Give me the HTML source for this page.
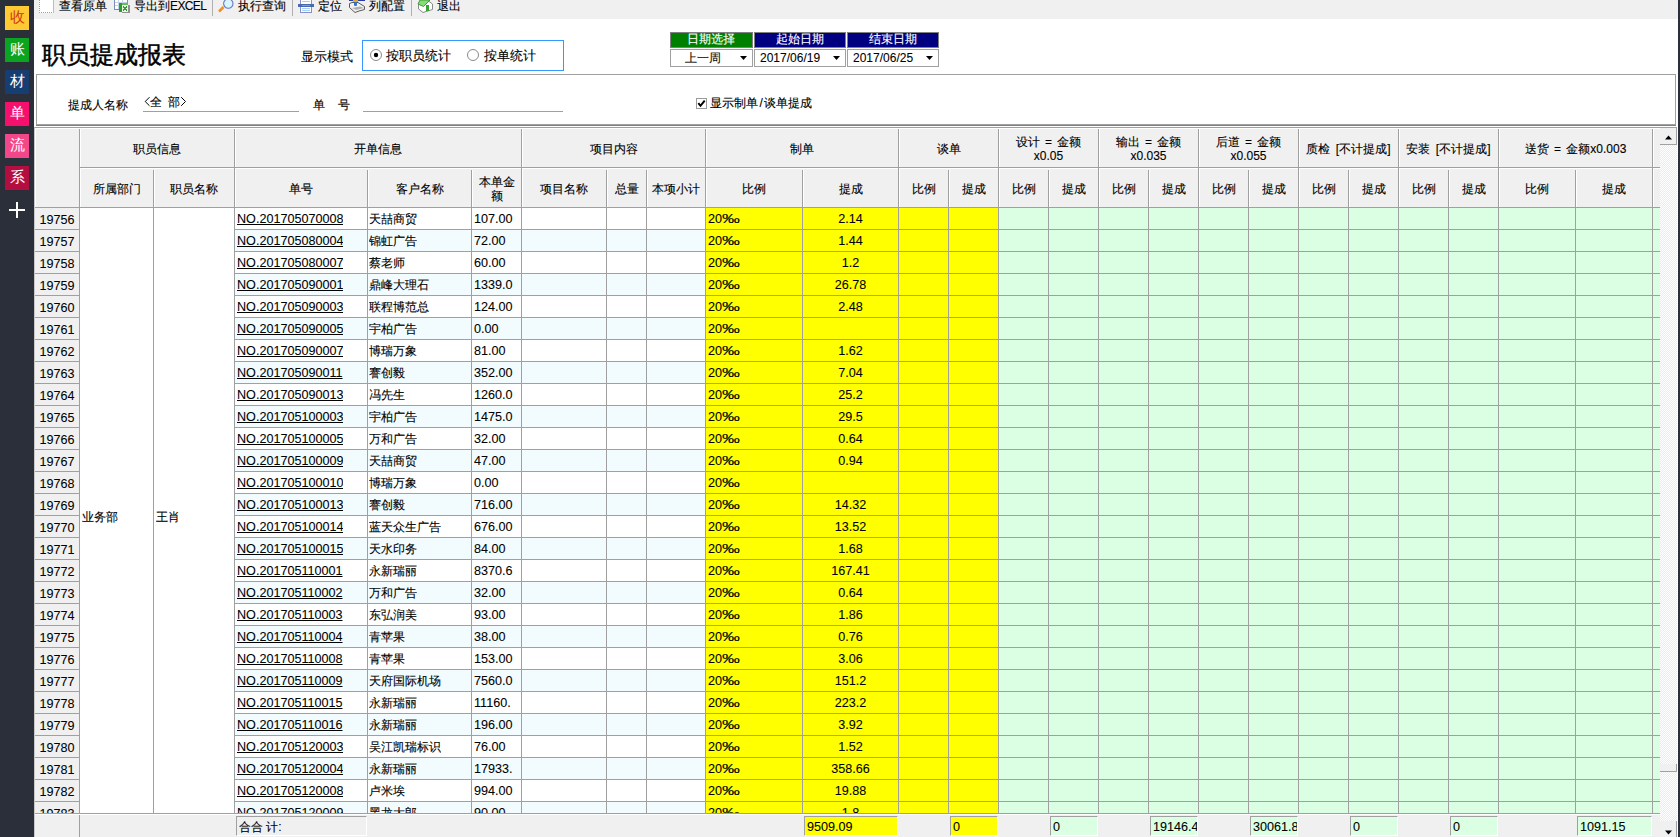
<!DOCTYPE html>
<html><head><meta charset="utf-8"><title>职员提成报表</title>
<style>
*{margin:0;padding:0;box-sizing:border-box}
html,body{width:1680px;height:837px;overflow:hidden;background:#fff;font-family:"Liberation Sans",sans-serif;font-size:12px;color:#000}
.a,.t,.c,.hc{-webkit-text-stroke-width:0.12px}
.sb{-webkit-text-stroke-width:0}
.a{position:absolute}
.t{position:absolute;white-space:nowrap;line-height:14px}
.sb{left:5px;width:24px;height:24px;color:#fff;font-size:15px;line-height:22px;text-align:center}
.tb{top:-2px;font-size:12px;line-height:16px}
.hl{position:absolute;height:1px;background:#a0a0a0}
.vl{position:absolute;width:1px;background:#a0a0a0}
.hc{position:absolute;text-align:center;line-height:14px;white-space:nowrap;word-spacing:2px}
.c{position:absolute;white-space:nowrap;line-height:14px;overflow:hidden}
.n{font-size:12.6px;-webkit-text-stroke-width:0.08px}
</style></head><body>

<div class="a" style="left:0;top:0;width:34px;height:837px;background:#2a2f3a"></div>
<div class="a" style="left:1678px;top:0;width:2px;height:837px;background:#2a2f3a"></div>
<div class="a sb" style="top:6px;background:#ffc933;color:#cf3a12">收</div>
<div class="a sb" style="top:38px;background:#0aa420;color:#fff">账</div>
<div class="a sb" style="top:70px;background:#173e73;color:#fff">材</div>
<div class="a sb" style="top:102px;background:#f5106e;color:#fff">单</div>
<div class="a sb" style="top:134px;background:#f3478a;color:#fff">流</div>
<div class="a sb" style="top:166px;background:#b40e40;color:#fff">系</div>
<div class="a" style="left:9px;top:209px;width:16px;height:2px;background:#fff"></div>
<div class="a" style="left:16px;top:202px;width:2px;height:16px;background:#fff"></div>
<div class="a" style="left:34px;top:0;width:1644px;height:19px;background:#f0f0f0"></div>
<div class="t tb" style="left:59px">查看原单</div>
<div class="t tb" style="left:134px">导出到<span style="letter-spacing:-0.6px">EXCEL</span></div>
<div class="t tb" style="left:238px">执行查询</div>
<div class="t tb" style="left:318px">定位</div>
<div class="t tb" style="left:369px">列配置</div>
<div class="t tb" style="left:437px">退出</div>
<div class="a" style="left:212px;top:0;width:1px;height:16px;background:#b0b0b0"></div>
<div class="a" style="left:292px;top:0;width:1px;height:16px;background:#b0b0b0"></div>
<div class="a" style="left:411px;top:0;width:1px;height:16px;background:#b0b0b0"></div>
<svg class="a" style="left:0;top:0" width="470" height="19" shape-rendering="crispEdges"><rect x="39" y="0" width="15" height="13" fill="#fff"/><path d="M39.5 0 V12.5 H53.5 V0" fill="none" stroke="#9a9ad0" stroke-dasharray="1,1"/><line x1="53.5" y1="0" x2="53.5" y2="13" stroke="#b8b8d8"/><rect x="114.5" y="-1" width="13" height="10.5" fill="#fff" stroke="#7890b8"/><line x1="118.5" y1="0" x2="118.5" y2="9" stroke="#c8d4e8"/><line x1="122.5" y1="0" x2="122.5" y2="9" stroke="#c8d4e8"/><line x1="115" y1="2.5" x2="127" y2="2.5" stroke="#c8d4e8"/><line x1="115" y1="5.5" x2="127" y2="5.5" stroke="#c8d4e8"/><rect x="128" y="5" width="2" height="8" fill="#909090"/><rect x="122" y="12" width="8" height="1" fill="#909090"/><rect x="119" y="3" width="9" height="2" fill="#5cc05c"/><rect x="119" y="3" width="3" height="9" fill="#2f9a2f"/><rect x="122" y="5" width="6" height="7" fill="#e8f8e0"/><path d="M123 6 L127 11 M127 6 L123 11" stroke="#3a9a3a" stroke-width="1.3"/></svg>
<svg class="a" style="left:0;top:0" width="470" height="19"><line x1="219" y1="11.5" x2="223.5" y2="7" stroke="#f0902a" stroke-width="2.6"/><circle cx="228.3" cy="3.6" r="4.7" fill="#d8f6ff" stroke="#6a76c0" stroke-width="1.1"/><rect x="300.5" y="-1" width="11" height="13.5" fill="#fff" stroke="#8a8ec8"/><rect x="302" y="1" width="8" height="1" fill="#a8d0ff"/><rect x="302" y="8" width="8" height="1" fill="#a8d0ff"/><rect x="302" y="10" width="8" height="1" fill="#a8d0ff"/><rect x="298" y="4" width="16" height="3" fill="#4a6ab0"/><rect x="302" y="5" width="8" height="1" fill="#7a9ae8"/><rect x="349" y="0" width="16" height="1" fill="#2a3aa0"/><path d="M349.5 3.5 L352 2.5 L358 2.5 L364.5 6.5 L364.5 9.5 L359 11 L355 12.5 L349.5 7.5 Z" fill="#f2f2f2" stroke="#5a5a5a" stroke-width="1"/><path d="M352 8 L360 6.5 L364 8 L356 10 Z" fill="#b0b0b0"/><rect x="353" y="0" width="5" height="2" fill="#d8b030"/><rect x="354" y="2" width="3" height="4" rx="1" fill="#3a70d0"/><path d="M418.5 4 L418.5 9 L423 12.5 L432.5 9.5 L432.5 4 L428.5 1 Z" fill="#fff" stroke="#8a8a8a" stroke-width="1"/><path d="M418 4 L420 0 L430 0 L423.5 6.5 Z" fill="#80e070" stroke="#3a8a3a" stroke-width="0.9"/><rect x="426" y="5" width="3" height="6" fill="#3aa03a"/></svg>
<div class="t" style="left:42px;top:41px;font-size:24px;line-height:28px;-webkit-text-stroke-width:0.5px">职员提成报表</div>
<div class="t" style="left:301px;top:50px;font-size:13px">显示模式</div>
<div class="a" style="left:362px;top:40px;width:202px;height:31px;border:1px solid #3399ff"></div>
<svg class="a" style="left:369px;top:48px" width="14" height="14"><circle cx="7" cy="7" r="5.5" fill="#fff" stroke="#8a8a8a"/><circle cx="7" cy="7" r="2.2" fill="#000"/></svg>
<div class="t" style="left:386px;top:49px;font-size:13px">按职员统计</div>
<svg class="a" style="left:466px;top:48px" width="14" height="14"><circle cx="7" cy="7" r="5.5" fill="#fff" stroke="#8a8a8a"/></svg>
<div class="t" style="left:484px;top:49px;font-size:13px">按单统计</div>
<div class="a" style="left:670px;top:32px;width:83px;height:16px;background:#008000;border:1px solid #808080"></div>
<div class="t" style="left:670px;top:32px;width:82px;color:#fff;text-align:center;font-size:12px">日期选择</div>
<div class="a" style="left:754px;top:32px;width:92px;height:16px;background:#000080;border:1px solid #808080"></div>
<div class="t" style="left:754px;top:32px;width:91px;color:#fff;text-align:center;font-size:12px">起始日期</div>
<div class="a" style="left:847px;top:32px;width:92px;height:16px;background:#000080;border:1px solid #808080"></div>
<div class="t" style="left:847px;top:32px;width:91px;color:#fff;text-align:center;font-size:12px">结束日期</div>
<div class="a" style="left:670px;top:49px;width:83px;height:18px;background:#fff;border:1px solid #a0a0a0"></div>
<div class="t n" style="left:685px;top:51px;font-size:12px;line-height:14px">上一周</div>
<svg class="a" style="left:740px;top:56px" width="8" height="5"><path d="M0 0 L7 0 L3.5 4 Z" fill="#000"/></svg>
<div class="a" style="left:754px;top:49px;width:92px;height:18px;background:#fff;border:1px solid #a0a0a0"></div>
<div class="t n" style="left:760px;top:51px;font-size:12px;line-height:14px">2017/06/19</div>
<svg class="a" style="left:833px;top:56px" width="8" height="5"><path d="M0 0 L7 0 L3.5 4 Z" fill="#000"/></svg>
<div class="a" style="left:847px;top:49px;width:92px;height:18px;background:#fff;border:1px solid #a0a0a0"></div>
<div class="t n" style="left:853px;top:51px;font-size:12px;line-height:14px">2017/06/25</div>
<svg class="a" style="left:926px;top:56px" width="8" height="5"><path d="M0 0 L7 0 L3.5 4 Z" fill="#000"/></svg>
<div class="a" style="left:36px;top:74px;width:1640px;height:51px;border:1px solid #a0a0a0"></div>
<div class="a" style="left:36px;top:125px;width:1640px;height:1px;background:#3391f0"></div>
<div class="t" style="left:68px;top:98px">提成人名称</div>
<svg class="a" style="left:140px;top:90px" width="50" height="20"><path d="M9.5 7.2 L5.2 11.5 L9.5 15.8 M41.2 7.2 L45.5 11.5 L41.2 15.8" fill="none" stroke="#000" stroke-width="1"/></svg><div class="t" style="left:150px;top:95px">全</div><div class="t" style="left:168px;top:95px">部</div>
<div class="a" style="left:143px;top:111px;width:156px;height:1px;background:#a0a0a0"></div>
<div class="t" style="left:313px;top:98px">单&nbsp;&nbsp;&nbsp;&nbsp;号</div>
<div class="a" style="left:363px;top:111px;width:200px;height:1px;background:#a0a0a0"></div>
<svg class="a" style="left:696px;top:98px" width="11" height="11"><rect x="0.5" y="0.5" width="10" height="10" fill="#fff" stroke="#9a9a9a"/><path d="M2.3 5.2 L4.5 7.8 L8.7 2.6" stroke="#000" stroke-width="2" fill="none"/></svg>
<div class="t" style="left:710px;top:96px">显示制单<span style="margin:0 1.5px">/</span>谈单提成</div>
<div class="a" style="left:34px;top:127px;width:1643px;height:710px;background:#fff;border-left:1px solid #c8c8c8;border-top:1px solid #a0a0a0"></div>
<div class="a" style="left:35px;top:128px;width:1625px;height:79px;background:#f0f0f0;border-top:1px solid #fff;border-left:1px solid #fff"></div>
<div class="a" style="left:35px;top:208px;width:1625px;height:605px;overflow:hidden">
<div class="a" style="left:0;top:0px;width:44px;height:21px;background:#f0f0f0"></div>
<div class="a" style="left:200px;top:0px;width:470px;height:21px;background:#fff"></div>
<div class="a" style="left:671px;top:0px;width:292px;height:21px;background:#ffff00"></div>
<div class="a" style="left:964px;top:0px;width:661px;height:21px;background:#daffe2"></div>
<div class="a" style="left:0;top:22px;width:44px;height:21px;background:#f0f0f0"></div>
<div class="a" style="left:200px;top:22px;width:470px;height:21px;background:#f2fcff"></div>
<div class="a" style="left:671px;top:22px;width:292px;height:21px;background:#ffff00"></div>
<div class="a" style="left:964px;top:22px;width:661px;height:21px;background:#daffe2"></div>
<div class="a" style="left:0;top:44px;width:44px;height:21px;background:#f0f0f0"></div>
<div class="a" style="left:200px;top:44px;width:470px;height:21px;background:#fff"></div>
<div class="a" style="left:671px;top:44px;width:292px;height:21px;background:#ffff00"></div>
<div class="a" style="left:964px;top:44px;width:661px;height:21px;background:#daffe2"></div>
<div class="a" style="left:0;top:66px;width:44px;height:21px;background:#f0f0f0"></div>
<div class="a" style="left:200px;top:66px;width:470px;height:21px;background:#f2fcff"></div>
<div class="a" style="left:671px;top:66px;width:292px;height:21px;background:#ffff00"></div>
<div class="a" style="left:964px;top:66px;width:661px;height:21px;background:#daffe2"></div>
<div class="a" style="left:0;top:88px;width:44px;height:21px;background:#f0f0f0"></div>
<div class="a" style="left:200px;top:88px;width:470px;height:21px;background:#fff"></div>
<div class="a" style="left:671px;top:88px;width:292px;height:21px;background:#ffff00"></div>
<div class="a" style="left:964px;top:88px;width:661px;height:21px;background:#daffe2"></div>
<div class="a" style="left:0;top:110px;width:44px;height:21px;background:#f0f0f0"></div>
<div class="a" style="left:200px;top:110px;width:470px;height:21px;background:#f2fcff"></div>
<div class="a" style="left:671px;top:110px;width:292px;height:21px;background:#ffff00"></div>
<div class="a" style="left:964px;top:110px;width:661px;height:21px;background:#daffe2"></div>
<div class="a" style="left:0;top:132px;width:44px;height:21px;background:#f0f0f0"></div>
<div class="a" style="left:200px;top:132px;width:470px;height:21px;background:#fff"></div>
<div class="a" style="left:671px;top:132px;width:292px;height:21px;background:#ffff00"></div>
<div class="a" style="left:964px;top:132px;width:661px;height:21px;background:#daffe2"></div>
<div class="a" style="left:0;top:154px;width:44px;height:21px;background:#f0f0f0"></div>
<div class="a" style="left:200px;top:154px;width:470px;height:21px;background:#f2fcff"></div>
<div class="a" style="left:671px;top:154px;width:292px;height:21px;background:#ffff00"></div>
<div class="a" style="left:964px;top:154px;width:661px;height:21px;background:#daffe2"></div>
<div class="a" style="left:0;top:176px;width:44px;height:21px;background:#f0f0f0"></div>
<div class="a" style="left:200px;top:176px;width:470px;height:21px;background:#fff"></div>
<div class="a" style="left:671px;top:176px;width:292px;height:21px;background:#ffff00"></div>
<div class="a" style="left:964px;top:176px;width:661px;height:21px;background:#daffe2"></div>
<div class="a" style="left:0;top:198px;width:44px;height:21px;background:#f0f0f0"></div>
<div class="a" style="left:200px;top:198px;width:470px;height:21px;background:#f2fcff"></div>
<div class="a" style="left:671px;top:198px;width:292px;height:21px;background:#ffff00"></div>
<div class="a" style="left:964px;top:198px;width:661px;height:21px;background:#daffe2"></div>
<div class="a" style="left:0;top:220px;width:44px;height:21px;background:#f0f0f0"></div>
<div class="a" style="left:200px;top:220px;width:470px;height:21px;background:#fff"></div>
<div class="a" style="left:671px;top:220px;width:292px;height:21px;background:#ffff00"></div>
<div class="a" style="left:964px;top:220px;width:661px;height:21px;background:#daffe2"></div>
<div class="a" style="left:0;top:242px;width:44px;height:21px;background:#f0f0f0"></div>
<div class="a" style="left:200px;top:242px;width:470px;height:21px;background:#f2fcff"></div>
<div class="a" style="left:671px;top:242px;width:292px;height:21px;background:#ffff00"></div>
<div class="a" style="left:964px;top:242px;width:661px;height:21px;background:#daffe2"></div>
<div class="a" style="left:0;top:264px;width:44px;height:21px;background:#f0f0f0"></div>
<div class="a" style="left:200px;top:264px;width:470px;height:21px;background:#fff"></div>
<div class="a" style="left:671px;top:264px;width:292px;height:21px;background:#ffff00"></div>
<div class="a" style="left:964px;top:264px;width:661px;height:21px;background:#daffe2"></div>
<div class="a" style="left:0;top:286px;width:44px;height:21px;background:#f0f0f0"></div>
<div class="a" style="left:200px;top:286px;width:470px;height:21px;background:#f2fcff"></div>
<div class="a" style="left:671px;top:286px;width:292px;height:21px;background:#ffff00"></div>
<div class="a" style="left:964px;top:286px;width:661px;height:21px;background:#daffe2"></div>
<div class="a" style="left:0;top:308px;width:44px;height:21px;background:#f0f0f0"></div>
<div class="a" style="left:200px;top:308px;width:470px;height:21px;background:#fff"></div>
<div class="a" style="left:671px;top:308px;width:292px;height:21px;background:#ffff00"></div>
<div class="a" style="left:964px;top:308px;width:661px;height:21px;background:#daffe2"></div>
<div class="a" style="left:0;top:330px;width:44px;height:21px;background:#f0f0f0"></div>
<div class="a" style="left:200px;top:330px;width:470px;height:21px;background:#f2fcff"></div>
<div class="a" style="left:671px;top:330px;width:292px;height:21px;background:#ffff00"></div>
<div class="a" style="left:964px;top:330px;width:661px;height:21px;background:#daffe2"></div>
<div class="a" style="left:0;top:352px;width:44px;height:21px;background:#f0f0f0"></div>
<div class="a" style="left:200px;top:352px;width:470px;height:21px;background:#fff"></div>
<div class="a" style="left:671px;top:352px;width:292px;height:21px;background:#ffff00"></div>
<div class="a" style="left:964px;top:352px;width:661px;height:21px;background:#daffe2"></div>
<div class="a" style="left:0;top:374px;width:44px;height:21px;background:#f0f0f0"></div>
<div class="a" style="left:200px;top:374px;width:470px;height:21px;background:#f2fcff"></div>
<div class="a" style="left:671px;top:374px;width:292px;height:21px;background:#ffff00"></div>
<div class="a" style="left:964px;top:374px;width:661px;height:21px;background:#daffe2"></div>
<div class="a" style="left:0;top:396px;width:44px;height:21px;background:#f0f0f0"></div>
<div class="a" style="left:200px;top:396px;width:470px;height:21px;background:#fff"></div>
<div class="a" style="left:671px;top:396px;width:292px;height:21px;background:#ffff00"></div>
<div class="a" style="left:964px;top:396px;width:661px;height:21px;background:#daffe2"></div>
<div class="a" style="left:0;top:418px;width:44px;height:21px;background:#f0f0f0"></div>
<div class="a" style="left:200px;top:418px;width:470px;height:21px;background:#f2fcff"></div>
<div class="a" style="left:671px;top:418px;width:292px;height:21px;background:#ffff00"></div>
<div class="a" style="left:964px;top:418px;width:661px;height:21px;background:#daffe2"></div>
<div class="a" style="left:0;top:440px;width:44px;height:21px;background:#f0f0f0"></div>
<div class="a" style="left:200px;top:440px;width:470px;height:21px;background:#fff"></div>
<div class="a" style="left:671px;top:440px;width:292px;height:21px;background:#ffff00"></div>
<div class="a" style="left:964px;top:440px;width:661px;height:21px;background:#daffe2"></div>
<div class="a" style="left:0;top:462px;width:44px;height:21px;background:#f0f0f0"></div>
<div class="a" style="left:200px;top:462px;width:470px;height:21px;background:#f2fcff"></div>
<div class="a" style="left:671px;top:462px;width:292px;height:21px;background:#ffff00"></div>
<div class="a" style="left:964px;top:462px;width:661px;height:21px;background:#daffe2"></div>
<div class="a" style="left:0;top:484px;width:44px;height:21px;background:#f0f0f0"></div>
<div class="a" style="left:200px;top:484px;width:470px;height:21px;background:#fff"></div>
<div class="a" style="left:671px;top:484px;width:292px;height:21px;background:#ffff00"></div>
<div class="a" style="left:964px;top:484px;width:661px;height:21px;background:#daffe2"></div>
<div class="a" style="left:0;top:506px;width:44px;height:21px;background:#f0f0f0"></div>
<div class="a" style="left:200px;top:506px;width:470px;height:21px;background:#f2fcff"></div>
<div class="a" style="left:671px;top:506px;width:292px;height:21px;background:#ffff00"></div>
<div class="a" style="left:964px;top:506px;width:661px;height:21px;background:#daffe2"></div>
<div class="a" style="left:0;top:528px;width:44px;height:21px;background:#f0f0f0"></div>
<div class="a" style="left:200px;top:528px;width:470px;height:21px;background:#fff"></div>
<div class="a" style="left:671px;top:528px;width:292px;height:21px;background:#ffff00"></div>
<div class="a" style="left:964px;top:528px;width:661px;height:21px;background:#daffe2"></div>
<div class="a" style="left:0;top:550px;width:44px;height:21px;background:#f0f0f0"></div>
<div class="a" style="left:200px;top:550px;width:470px;height:21px;background:#f2fcff"></div>
<div class="a" style="left:671px;top:550px;width:292px;height:21px;background:#ffff00"></div>
<div class="a" style="left:964px;top:550px;width:661px;height:21px;background:#daffe2"></div>
<div class="a" style="left:0;top:572px;width:44px;height:21px;background:#f0f0f0"></div>
<div class="a" style="left:200px;top:572px;width:470px;height:21px;background:#fff"></div>
<div class="a" style="left:671px;top:572px;width:292px;height:21px;background:#ffff00"></div>
<div class="a" style="left:964px;top:572px;width:661px;height:21px;background:#daffe2"></div>
<div class="a" style="left:0;top:594px;width:44px;height:21px;background:#f0f0f0"></div>
<div class="a" style="left:200px;top:594px;width:470px;height:21px;background:#f2fcff"></div>
<div class="a" style="left:671px;top:594px;width:292px;height:21px;background:#ffff00"></div>
<div class="a" style="left:964px;top:594px;width:661px;height:21px;background:#daffe2"></div>
<div class="hl" style="left:0;top:21px;width:1625px"></div>
<div class="hl" style="left:0;top:43px;width:1625px"></div>
<div class="hl" style="left:0;top:65px;width:1625px"></div>
<div class="hl" style="left:0;top:87px;width:1625px"></div>
<div class="hl" style="left:0;top:109px;width:1625px"></div>
<div class="hl" style="left:0;top:131px;width:1625px"></div>
<div class="hl" style="left:0;top:153px;width:1625px"></div>
<div class="hl" style="left:0;top:175px;width:1625px"></div>
<div class="hl" style="left:0;top:197px;width:1625px"></div>
<div class="hl" style="left:0;top:219px;width:1625px"></div>
<div class="hl" style="left:0;top:241px;width:1625px"></div>
<div class="hl" style="left:0;top:263px;width:1625px"></div>
<div class="hl" style="left:0;top:285px;width:1625px"></div>
<div class="hl" style="left:0;top:307px;width:1625px"></div>
<div class="hl" style="left:0;top:329px;width:1625px"></div>
<div class="hl" style="left:0;top:351px;width:1625px"></div>
<div class="hl" style="left:0;top:373px;width:1625px"></div>
<div class="hl" style="left:0;top:395px;width:1625px"></div>
<div class="hl" style="left:0;top:417px;width:1625px"></div>
<div class="hl" style="left:0;top:439px;width:1625px"></div>
<div class="hl" style="left:0;top:461px;width:1625px"></div>
<div class="hl" style="left:0;top:483px;width:1625px"></div>
<div class="hl" style="left:0;top:505px;width:1625px"></div>
<div class="hl" style="left:0;top:527px;width:1625px"></div>
<div class="hl" style="left:0;top:549px;width:1625px"></div>
<div class="hl" style="left:0;top:571px;width:1625px"></div>
<div class="hl" style="left:0;top:593px;width:1625px"></div>
<div class="hl" style="left:0;top:615px;width:1625px"></div>
<div class="vl" style="left:44px;top:0;height:700px"></div>
<div class="vl" style="left:118px;top:0;height:700px"></div>
<div class="vl" style="left:199px;top:0;height:700px"></div>
<div class="vl" style="left:332px;top:0;height:700px"></div>
<div class="vl" style="left:436px;top:0;height:700px"></div>
<div class="vl" style="left:486px;top:0;height:700px"></div>
<div class="vl" style="left:571px;top:0;height:700px"></div>
<div class="vl" style="left:611px;top:0;height:700px"></div>
<div class="vl" style="left:670px;top:0;height:700px"></div>
<div class="vl" style="left:767px;top:0;height:700px"></div>
<div class="vl" style="left:863px;top:0;height:700px"></div>
<div class="vl" style="left:913px;top:0;height:700px"></div>
<div class="vl" style="left:963px;top:0;height:700px"></div>
<div class="vl" style="left:1013px;top:0;height:700px"></div>
<div class="vl" style="left:1063px;top:0;height:700px"></div>
<div class="vl" style="left:1113px;top:0;height:700px"></div>
<div class="vl" style="left:1163px;top:0;height:700px"></div>
<div class="vl" style="left:1213px;top:0;height:700px"></div>
<div class="vl" style="left:1263px;top:0;height:700px"></div>
<div class="vl" style="left:1313px;top:0;height:700px"></div>
<div class="vl" style="left:1363px;top:0;height:700px"></div>
<div class="vl" style="left:1413px;top:0;height:700px"></div>
<div class="vl" style="left:1463px;top:0;height:700px"></div>
<div class="vl" style="left:1540px;top:0;height:700px"></div>
<div class="vl" style="left:1617px;top:0;height:700px"></div>
<div class="c n" style="left:0;top:5px;width:44px;text-align:center">19756</div>
<div class="c n" style="left:202px;top:4px;text-decoration:underline">NO.201705070008</div>
<div class="c" style="left:334px;top:4px">天喆商贸</div>
<div class="c n" style="left:439px;top:4px;width:46px">107.00</div>
<div class="c n" style="left:673px;top:4px;width:90px">20<span style="display:inline-block;transform:scaleX(1.42);transform-origin:0 0">‰</span></div>
<div class="c n" style="left:768px;top:4px;width:95px;text-align:center">2.14</div>
<div class="c n" style="left:0;top:27px;width:44px;text-align:center">19757</div>
<div class="c n" style="left:202px;top:26px;text-decoration:underline">NO.201705080004</div>
<div class="c" style="left:334px;top:26px">锦虹广告</div>
<div class="c n" style="left:439px;top:26px;width:46px">72.00</div>
<div class="c n" style="left:673px;top:26px;width:90px">20<span style="display:inline-block;transform:scaleX(1.42);transform-origin:0 0">‰</span></div>
<div class="c n" style="left:768px;top:26px;width:95px;text-align:center">1.44</div>
<div class="c n" style="left:0;top:49px;width:44px;text-align:center">19758</div>
<div class="c n" style="left:202px;top:48px;text-decoration:underline">NO.201705080007</div>
<div class="c" style="left:334px;top:48px">蔡老师</div>
<div class="c n" style="left:439px;top:48px;width:46px">60.00</div>
<div class="c n" style="left:673px;top:48px;width:90px">20<span style="display:inline-block;transform:scaleX(1.42);transform-origin:0 0">‰</span></div>
<div class="c n" style="left:768px;top:48px;width:95px;text-align:center">1.2</div>
<div class="c n" style="left:0;top:71px;width:44px;text-align:center">19759</div>
<div class="c n" style="left:202px;top:70px;text-decoration:underline">NO.201705090001</div>
<div class="c" style="left:334px;top:70px">鼎峰大理石</div>
<div class="c n" style="left:439px;top:70px;width:46px">1339.0</div>
<div class="c n" style="left:673px;top:70px;width:90px">20<span style="display:inline-block;transform:scaleX(1.42);transform-origin:0 0">‰</span></div>
<div class="c n" style="left:768px;top:70px;width:95px;text-align:center">26.78</div>
<div class="c n" style="left:0;top:93px;width:44px;text-align:center">19760</div>
<div class="c n" style="left:202px;top:92px;text-decoration:underline">NO.201705090003</div>
<div class="c" style="left:334px;top:92px">联程博范总</div>
<div class="c n" style="left:439px;top:92px;width:46px">124.00</div>
<div class="c n" style="left:673px;top:92px;width:90px">20<span style="display:inline-block;transform:scaleX(1.42);transform-origin:0 0">‰</span></div>
<div class="c n" style="left:768px;top:92px;width:95px;text-align:center">2.48</div>
<div class="c n" style="left:0;top:115px;width:44px;text-align:center">19761</div>
<div class="c n" style="left:202px;top:114px;text-decoration:underline">NO.201705090005</div>
<div class="c" style="left:334px;top:114px">宇柏广告</div>
<div class="c n" style="left:439px;top:114px;width:46px">0.00</div>
<div class="c n" style="left:673px;top:114px;width:90px">20<span style="display:inline-block;transform:scaleX(1.42);transform-origin:0 0">‰</span></div>
<div class="c n" style="left:0;top:137px;width:44px;text-align:center">19762</div>
<div class="c n" style="left:202px;top:136px;text-decoration:underline">NO.201705090007</div>
<div class="c" style="left:334px;top:136px">博瑞万象</div>
<div class="c n" style="left:439px;top:136px;width:46px">81.00</div>
<div class="c n" style="left:673px;top:136px;width:90px">20<span style="display:inline-block;transform:scaleX(1.42);transform-origin:0 0">‰</span></div>
<div class="c n" style="left:768px;top:136px;width:95px;text-align:center">1.62</div>
<div class="c n" style="left:0;top:159px;width:44px;text-align:center">19763</div>
<div class="c n" style="left:202px;top:158px;text-decoration:underline">NO.201705090011</div>
<div class="c" style="left:334px;top:158px">謇创毅</div>
<div class="c n" style="left:439px;top:158px;width:46px">352.00</div>
<div class="c n" style="left:673px;top:158px;width:90px">20<span style="display:inline-block;transform:scaleX(1.42);transform-origin:0 0">‰</span></div>
<div class="c n" style="left:768px;top:158px;width:95px;text-align:center">7.04</div>
<div class="c n" style="left:0;top:181px;width:44px;text-align:center">19764</div>
<div class="c n" style="left:202px;top:180px;text-decoration:underline">NO.201705090013</div>
<div class="c" style="left:334px;top:180px">冯先生</div>
<div class="c n" style="left:439px;top:180px;width:46px">1260.0</div>
<div class="c n" style="left:673px;top:180px;width:90px">20<span style="display:inline-block;transform:scaleX(1.42);transform-origin:0 0">‰</span></div>
<div class="c n" style="left:768px;top:180px;width:95px;text-align:center">25.2</div>
<div class="c n" style="left:0;top:203px;width:44px;text-align:center">19765</div>
<div class="c n" style="left:202px;top:202px;text-decoration:underline">NO.201705100003</div>
<div class="c" style="left:334px;top:202px">宇柏广告</div>
<div class="c n" style="left:439px;top:202px;width:46px">1475.0</div>
<div class="c n" style="left:673px;top:202px;width:90px">20<span style="display:inline-block;transform:scaleX(1.42);transform-origin:0 0">‰</span></div>
<div class="c n" style="left:768px;top:202px;width:95px;text-align:center">29.5</div>
<div class="c n" style="left:0;top:225px;width:44px;text-align:center">19766</div>
<div class="c n" style="left:202px;top:224px;text-decoration:underline">NO.201705100005</div>
<div class="c" style="left:334px;top:224px">万和广告</div>
<div class="c n" style="left:439px;top:224px;width:46px">32.00</div>
<div class="c n" style="left:673px;top:224px;width:90px">20<span style="display:inline-block;transform:scaleX(1.42);transform-origin:0 0">‰</span></div>
<div class="c n" style="left:768px;top:224px;width:95px;text-align:center">0.64</div>
<div class="c n" style="left:0;top:247px;width:44px;text-align:center">19767</div>
<div class="c n" style="left:202px;top:246px;text-decoration:underline">NO.201705100009</div>
<div class="c" style="left:334px;top:246px">天喆商贸</div>
<div class="c n" style="left:439px;top:246px;width:46px">47.00</div>
<div class="c n" style="left:673px;top:246px;width:90px">20<span style="display:inline-block;transform:scaleX(1.42);transform-origin:0 0">‰</span></div>
<div class="c n" style="left:768px;top:246px;width:95px;text-align:center">0.94</div>
<div class="c n" style="left:0;top:269px;width:44px;text-align:center">19768</div>
<div class="c n" style="left:202px;top:268px;text-decoration:underline">NO.201705100010</div>
<div class="c" style="left:334px;top:268px">博瑞万象</div>
<div class="c n" style="left:439px;top:268px;width:46px">0.00</div>
<div class="c n" style="left:673px;top:268px;width:90px">20<span style="display:inline-block;transform:scaleX(1.42);transform-origin:0 0">‰</span></div>
<div class="c n" style="left:0;top:291px;width:44px;text-align:center">19769</div>
<div class="c n" style="left:202px;top:290px;text-decoration:underline">NO.201705100013</div>
<div class="c" style="left:334px;top:290px">謇创毅</div>
<div class="c n" style="left:439px;top:290px;width:46px">716.00</div>
<div class="c n" style="left:673px;top:290px;width:90px">20<span style="display:inline-block;transform:scaleX(1.42);transform-origin:0 0">‰</span></div>
<div class="c n" style="left:768px;top:290px;width:95px;text-align:center">14.32</div>
<div class="c n" style="left:0;top:313px;width:44px;text-align:center">19770</div>
<div class="c n" style="left:202px;top:312px;text-decoration:underline">NO.201705100014</div>
<div class="c" style="left:334px;top:312px">蓝天众生广告</div>
<div class="c n" style="left:439px;top:312px;width:46px">676.00</div>
<div class="c n" style="left:673px;top:312px;width:90px">20<span style="display:inline-block;transform:scaleX(1.42);transform-origin:0 0">‰</span></div>
<div class="c n" style="left:768px;top:312px;width:95px;text-align:center">13.52</div>
<div class="c n" style="left:0;top:335px;width:44px;text-align:center">19771</div>
<div class="c n" style="left:202px;top:334px;text-decoration:underline">NO.201705100015</div>
<div class="c" style="left:334px;top:334px">天水印务</div>
<div class="c n" style="left:439px;top:334px;width:46px">84.00</div>
<div class="c n" style="left:673px;top:334px;width:90px">20<span style="display:inline-block;transform:scaleX(1.42);transform-origin:0 0">‰</span></div>
<div class="c n" style="left:768px;top:334px;width:95px;text-align:center">1.68</div>
<div class="c n" style="left:0;top:357px;width:44px;text-align:center">19772</div>
<div class="c n" style="left:202px;top:356px;text-decoration:underline">NO.201705110001</div>
<div class="c" style="left:334px;top:356px">永新瑞丽</div>
<div class="c n" style="left:439px;top:356px;width:46px">8370.6</div>
<div class="c n" style="left:673px;top:356px;width:90px">20<span style="display:inline-block;transform:scaleX(1.42);transform-origin:0 0">‰</span></div>
<div class="c n" style="left:768px;top:356px;width:95px;text-align:center">167.41</div>
<div class="c n" style="left:0;top:379px;width:44px;text-align:center">19773</div>
<div class="c n" style="left:202px;top:378px;text-decoration:underline">NO.201705110002</div>
<div class="c" style="left:334px;top:378px">万和广告</div>
<div class="c n" style="left:439px;top:378px;width:46px">32.00</div>
<div class="c n" style="left:673px;top:378px;width:90px">20<span style="display:inline-block;transform:scaleX(1.42);transform-origin:0 0">‰</span></div>
<div class="c n" style="left:768px;top:378px;width:95px;text-align:center">0.64</div>
<div class="c n" style="left:0;top:401px;width:44px;text-align:center">19774</div>
<div class="c n" style="left:202px;top:400px;text-decoration:underline">NO.201705110003</div>
<div class="c" style="left:334px;top:400px">东弘润美</div>
<div class="c n" style="left:439px;top:400px;width:46px">93.00</div>
<div class="c n" style="left:673px;top:400px;width:90px">20<span style="display:inline-block;transform:scaleX(1.42);transform-origin:0 0">‰</span></div>
<div class="c n" style="left:768px;top:400px;width:95px;text-align:center">1.86</div>
<div class="c n" style="left:0;top:423px;width:44px;text-align:center">19775</div>
<div class="c n" style="left:202px;top:422px;text-decoration:underline">NO.201705110004</div>
<div class="c" style="left:334px;top:422px">青苹果</div>
<div class="c n" style="left:439px;top:422px;width:46px">38.00</div>
<div class="c n" style="left:673px;top:422px;width:90px">20<span style="display:inline-block;transform:scaleX(1.42);transform-origin:0 0">‰</span></div>
<div class="c n" style="left:768px;top:422px;width:95px;text-align:center">0.76</div>
<div class="c n" style="left:0;top:445px;width:44px;text-align:center">19776</div>
<div class="c n" style="left:202px;top:444px;text-decoration:underline">NO.201705110008</div>
<div class="c" style="left:334px;top:444px">青苹果</div>
<div class="c n" style="left:439px;top:444px;width:46px">153.00</div>
<div class="c n" style="left:673px;top:444px;width:90px">20<span style="display:inline-block;transform:scaleX(1.42);transform-origin:0 0">‰</span></div>
<div class="c n" style="left:768px;top:444px;width:95px;text-align:center">3.06</div>
<div class="c n" style="left:0;top:467px;width:44px;text-align:center">19777</div>
<div class="c n" style="left:202px;top:466px;text-decoration:underline">NO.201705110009</div>
<div class="c" style="left:334px;top:466px">天府国际机场</div>
<div class="c n" style="left:439px;top:466px;width:46px">7560.0</div>
<div class="c n" style="left:673px;top:466px;width:90px">20<span style="display:inline-block;transform:scaleX(1.42);transform-origin:0 0">‰</span></div>
<div class="c n" style="left:768px;top:466px;width:95px;text-align:center">151.2</div>
<div class="c n" style="left:0;top:489px;width:44px;text-align:center">19778</div>
<div class="c n" style="left:202px;top:488px;text-decoration:underline">NO.201705110015</div>
<div class="c" style="left:334px;top:488px">永新瑞丽</div>
<div class="c n" style="left:439px;top:488px;width:46px">11160.</div>
<div class="c n" style="left:673px;top:488px;width:90px">20<span style="display:inline-block;transform:scaleX(1.42);transform-origin:0 0">‰</span></div>
<div class="c n" style="left:768px;top:488px;width:95px;text-align:center">223.2</div>
<div class="c n" style="left:0;top:511px;width:44px;text-align:center">19779</div>
<div class="c n" style="left:202px;top:510px;text-decoration:underline">NO.201705110016</div>
<div class="c" style="left:334px;top:510px">永新瑞丽</div>
<div class="c n" style="left:439px;top:510px;width:46px">196.00</div>
<div class="c n" style="left:673px;top:510px;width:90px">20<span style="display:inline-block;transform:scaleX(1.42);transform-origin:0 0">‰</span></div>
<div class="c n" style="left:768px;top:510px;width:95px;text-align:center">3.92</div>
<div class="c n" style="left:0;top:533px;width:44px;text-align:center">19780</div>
<div class="c n" style="left:202px;top:532px;text-decoration:underline">NO.201705120003</div>
<div class="c" style="left:334px;top:532px">吴江凯瑞标识</div>
<div class="c n" style="left:439px;top:532px;width:46px">76.00</div>
<div class="c n" style="left:673px;top:532px;width:90px">20<span style="display:inline-block;transform:scaleX(1.42);transform-origin:0 0">‰</span></div>
<div class="c n" style="left:768px;top:532px;width:95px;text-align:center">1.52</div>
<div class="c n" style="left:0;top:555px;width:44px;text-align:center">19781</div>
<div class="c n" style="left:202px;top:554px;text-decoration:underline">NO.201705120004</div>
<div class="c" style="left:334px;top:554px">永新瑞丽</div>
<div class="c n" style="left:439px;top:554px;width:46px">17933.</div>
<div class="c n" style="left:673px;top:554px;width:90px">20<span style="display:inline-block;transform:scaleX(1.42);transform-origin:0 0">‰</span></div>
<div class="c n" style="left:768px;top:554px;width:95px;text-align:center">358.66</div>
<div class="c n" style="left:0;top:577px;width:44px;text-align:center">19782</div>
<div class="c n" style="left:202px;top:576px;text-decoration:underline">NO.201705120008</div>
<div class="c" style="left:334px;top:576px">卢米埃</div>
<div class="c n" style="left:439px;top:576px;width:46px">994.00</div>
<div class="c n" style="left:673px;top:576px;width:90px">20<span style="display:inline-block;transform:scaleX(1.42);transform-origin:0 0">‰</span></div>
<div class="c n" style="left:768px;top:576px;width:95px;text-align:center">19.88</div>
<div class="c n" style="left:0;top:599px;width:44px;text-align:center">19783</div>
<div class="c n" style="left:202px;top:598px;text-decoration:underline">NO.201705120009</div>
<div class="c" style="left:334px;top:598px">黑龙大郎</div>
<div class="c n" style="left:439px;top:598px;width:46px">90.00</div>
<div class="c n" style="left:673px;top:598px;width:90px">20<span style="display:inline-block;transform:scaleX(1.42);transform-origin:0 0">‰</span></div>
<div class="c n" style="left:768px;top:598px;width:95px;text-align:center">1.8</div>
<div class="a" style="left:45px;top:0;width:73px;height:700px;background:#fff"></div>
<div class="a" style="left:119px;top:0;width:80px;height:700px;background:#fff"></div>
<div class="c" style="left:47px;top:302px">业务部</div>
<div class="c" style="left:121px;top:302px">王肖</div>
</div>
<div class="hl" style="left:35px;top:207px;width:1625px"></div>
<div class="hl" style="left:79px;top:167px;width:1581px"></div>
<div class="a" style="left:80px;top:168px;width:1580px;height:1px;background:#fff"></div>
<div class="vl" style="left:79px;top:129px;height:78px"></div>
<div class="a" style="left:80px;top:129px;width:1px;height:38px;background:#fff"></div>
<div class="a" style="left:80px;top:168px;width:1px;height:39px;background:#fff"></div>
<div class="vl" style="left:234px;top:129px;height:78px"></div>
<div class="a" style="left:235px;top:129px;width:1px;height:38px;background:#fff"></div>
<div class="a" style="left:235px;top:168px;width:1px;height:39px;background:#fff"></div>
<div class="vl" style="left:521px;top:129px;height:78px"></div>
<div class="a" style="left:522px;top:129px;width:1px;height:38px;background:#fff"></div>
<div class="a" style="left:522px;top:168px;width:1px;height:39px;background:#fff"></div>
<div class="vl" style="left:705px;top:129px;height:78px"></div>
<div class="a" style="left:706px;top:129px;width:1px;height:38px;background:#fff"></div>
<div class="a" style="left:706px;top:168px;width:1px;height:39px;background:#fff"></div>
<div class="vl" style="left:898px;top:129px;height:78px"></div>
<div class="a" style="left:899px;top:129px;width:1px;height:38px;background:#fff"></div>
<div class="a" style="left:899px;top:168px;width:1px;height:39px;background:#fff"></div>
<div class="vl" style="left:998px;top:129px;height:78px"></div>
<div class="a" style="left:999px;top:129px;width:1px;height:38px;background:#fff"></div>
<div class="a" style="left:999px;top:168px;width:1px;height:39px;background:#fff"></div>
<div class="vl" style="left:1098px;top:129px;height:78px"></div>
<div class="a" style="left:1099px;top:129px;width:1px;height:38px;background:#fff"></div>
<div class="a" style="left:1099px;top:168px;width:1px;height:39px;background:#fff"></div>
<div class="vl" style="left:1198px;top:129px;height:78px"></div>
<div class="a" style="left:1199px;top:129px;width:1px;height:38px;background:#fff"></div>
<div class="a" style="left:1199px;top:168px;width:1px;height:39px;background:#fff"></div>
<div class="vl" style="left:1298px;top:129px;height:78px"></div>
<div class="a" style="left:1299px;top:129px;width:1px;height:38px;background:#fff"></div>
<div class="a" style="left:1299px;top:168px;width:1px;height:39px;background:#fff"></div>
<div class="vl" style="left:1398px;top:129px;height:78px"></div>
<div class="a" style="left:1399px;top:129px;width:1px;height:38px;background:#fff"></div>
<div class="a" style="left:1399px;top:168px;width:1px;height:39px;background:#fff"></div>
<div class="vl" style="left:1498px;top:129px;height:78px"></div>
<div class="a" style="left:1499px;top:129px;width:1px;height:38px;background:#fff"></div>
<div class="a" style="left:1499px;top:168px;width:1px;height:39px;background:#fff"></div>
<div class="vl" style="left:1652px;top:129px;height:78px"></div>
<div class="a" style="left:1653px;top:129px;width:1px;height:38px;background:#fff"></div>
<div class="a" style="left:1653px;top:168px;width:1px;height:39px;background:#fff"></div>
<div class="vl" style="left:153px;top:170px;height:37px"></div>
<div class="a" style="left:154px;top:170px;width:1px;height:37px;background:#fff"></div>
<div class="vl" style="left:367px;top:170px;height:37px"></div>
<div class="a" style="left:368px;top:170px;width:1px;height:37px;background:#fff"></div>
<div class="vl" style="left:471px;top:170px;height:37px"></div>
<div class="a" style="left:472px;top:170px;width:1px;height:37px;background:#fff"></div>
<div class="vl" style="left:606px;top:170px;height:37px"></div>
<div class="a" style="left:607px;top:170px;width:1px;height:37px;background:#fff"></div>
<div class="vl" style="left:646px;top:170px;height:37px"></div>
<div class="a" style="left:647px;top:170px;width:1px;height:37px;background:#fff"></div>
<div class="vl" style="left:802px;top:170px;height:37px"></div>
<div class="a" style="left:803px;top:170px;width:1px;height:37px;background:#fff"></div>
<div class="vl" style="left:948px;top:170px;height:37px"></div>
<div class="a" style="left:949px;top:170px;width:1px;height:37px;background:#fff"></div>
<div class="vl" style="left:1048px;top:170px;height:37px"></div>
<div class="a" style="left:1049px;top:170px;width:1px;height:37px;background:#fff"></div>
<div class="vl" style="left:1148px;top:170px;height:37px"></div>
<div class="a" style="left:1149px;top:170px;width:1px;height:37px;background:#fff"></div>
<div class="vl" style="left:1248px;top:170px;height:37px"></div>
<div class="a" style="left:1249px;top:170px;width:1px;height:37px;background:#fff"></div>
<div class="vl" style="left:1348px;top:170px;height:37px"></div>
<div class="a" style="left:1349px;top:170px;width:1px;height:37px;background:#fff"></div>
<div class="vl" style="left:1448px;top:170px;height:37px"></div>
<div class="a" style="left:1449px;top:170px;width:1px;height:37px;background:#fff"></div>
<div class="vl" style="left:1575px;top:170px;height:37px"></div>
<div class="a" style="left:1576px;top:170px;width:1px;height:37px;background:#fff"></div>
<div class="hc" style="left:80px;top:142px;width:154px">职员信息</div>
<div class="hc" style="left:235px;top:142px;width:286px">开单信息</div>
<div class="hc" style="left:522px;top:142px;width:183px">项目内容</div>
<div class="hc" style="left:706px;top:142px;width:192px">制单</div>
<div class="hc" style="left:899px;top:142px;width:99px">谈单</div>
<div class="hc" style="left:999px;top:135px;width:99px;line-height:14px">设计 = 金额<br>x0.05</div>
<div class="hc" style="left:1099px;top:135px;width:99px;line-height:14px">输出 = 金额<br>x0.035</div>
<div class="hc" style="left:1199px;top:135px;width:99px;line-height:14px">后道 = 金额<br>x0.055</div>
<div class="hc" style="left:1299px;top:142px;width:99px">质检 [不计提成]</div>
<div class="hc" style="left:1399px;top:142px;width:99px">安装 [不计提成]</div>
<div class="hc" style="left:1499px;top:142px;width:153px">送货 = 金额x0.003</div>
<div class="hc" style="left:80px;top:182px;width:73px">所属部门</div>
<div class="hc" style="left:154px;top:182px;width:80px">职员名称</div>
<div class="hc" style="left:235px;top:182px;width:132px">单号</div>
<div class="hc" style="left:368px;top:182px;width:103px">客户名称</div>
<div class="hc" style="left:472px;top:175px;width:49px;line-height:14px">本单金<br>额</div>
<div class="hc" style="left:522px;top:182px;width:84px">项目名称</div>
<div class="hc" style="left:607px;top:182px;width:39px">总量</div>
<div class="hc" style="left:647px;top:182px;width:58px">本项小计</div>
<div class="hc" style="left:706px;top:182px;width:96px">比例</div>
<div class="hc" style="left:803px;top:182px;width:95px">提成</div>
<div class="hc" style="left:899px;top:182px;width:49px">比例</div>
<div class="hc" style="left:949px;top:182px;width:49px">提成</div>
<div class="hc" style="left:999px;top:182px;width:49px">比例</div>
<div class="hc" style="left:1049px;top:182px;width:49px">提成</div>
<div class="hc" style="left:1099px;top:182px;width:49px">比例</div>
<div class="hc" style="left:1149px;top:182px;width:49px">提成</div>
<div class="hc" style="left:1199px;top:182px;width:49px">比例</div>
<div class="hc" style="left:1249px;top:182px;width:49px">提成</div>
<div class="hc" style="left:1299px;top:182px;width:49px">比例</div>
<div class="hc" style="left:1349px;top:182px;width:49px">提成</div>
<div class="hc" style="left:1399px;top:182px;width:49px">比例</div>
<div class="hc" style="left:1449px;top:182px;width:49px">提成</div>
<div class="hc" style="left:1499px;top:182px;width:76px">比例</div>
<div class="hc" style="left:1576px;top:182px;width:76px">提成</div>
<div class="a" style="left:35px;top:813px;width:1625px;height:1px;background:#a0a0a0"></div>
<div class="a" style="left:35px;top:814px;width:1625px;height:23px;background:#f0f0f0;border-top:1px solid #fff"></div>
<div class="a" style="left:79px;top:815px;width:1px;height:22px;background:#a0a0a0"></div>
<div class="a" style="left:236px;top:816px;width:131px;height:20px;border-top:1px solid #a0a0a0;border-left:1px solid #a0a0a0;border-right:1px solid #fff;border-bottom:1px solid #fff;background:#f0f0f0"></div>
<div class="t" style="left:239px;top:820px">合合&nbsp;计:</div>nbsp;计<span style="margin-left:2px">:</span></div>
<div class="a" style="left:804px;top:816px;width:94px;height:20px;border-top:1px solid #a0a0a0;border-left:1px solid #a0a0a0;border-right:1px solid #fff;border-bottom:1px solid #fff;background:#ffff00;overflow:hidden"><div class="t n" style="left:2px;top:3px">9509.09</div></div>
<div class="a" style="left:950px;top:816px;width:48px;height:20px;border-top:1px solid #a0a0a0;border-left:1px solid #a0a0a0;border-right:1px solid #fff;border-bottom:1px solid #fff;background:#ffff00;overflow:hidden"><div class="t n" style="left:2px;top:3px">0</div></div>
<div class="a" style="left:1050px;top:816px;width:48px;height:20px;border-top:1px solid #a0a0a0;border-left:1px solid #a0a0a0;border-right:1px solid #fff;border-bottom:1px solid #fff;background:#daffe2;overflow:hidden"><div class="t n" style="left:2px;top:3px">0</div></div>
<div class="a" style="left:1150px;top:816px;width:48px;height:20px;border-top:1px solid #a0a0a0;border-left:1px solid #a0a0a0;border-right:1px solid #fff;border-bottom:1px solid #fff;background:#daffe2;overflow:hidden"><div class="t n" style="left:2px;top:3px">19146.4</div></div>
<div class="a" style="left:1250px;top:816px;width:48px;height:20px;border-top:1px solid #a0a0a0;border-left:1px solid #a0a0a0;border-right:1px solid #fff;border-bottom:1px solid #fff;background:#daffe2;overflow:hidden"><div class="t n" style="left:2px;top:3px">30061.8</div></div>
<div class="a" style="left:1350px;top:816px;width:48px;height:20px;border-top:1px solid #a0a0a0;border-left:1px solid #a0a0a0;border-right:1px solid #fff;border-bottom:1px solid #fff;background:#daffe2;overflow:hidden"><div class="t n" style="left:2px;top:3px">0</div></div>
<div class="a" style="left:1450px;top:816px;width:48px;height:20px;border-top:1px solid #a0a0a0;border-left:1px solid #a0a0a0;border-right:1px solid #fff;border-bottom:1px solid #fff;background:#daffe2;overflow:hidden"><div class="t n" style="left:2px;top:3px">0</div></div>
<div class="a" style="left:1577px;top:816px;width:75px;height:20px;border-top:1px solid #a0a0a0;border-left:1px solid #a0a0a0;border-right:1px solid #fff;border-bottom:1px solid #fff;background:#daffe2;overflow:hidden"><div class="t n" style="left:2px;top:3px">1091.15</div></div>
<div class="a" style="left:1660px;top:128px;width:17px;height:709px;background:repeating-conic-gradient(#ebebeb 0 25%,#ffffff 0 50%) 0 0/2px 2px"></div>
<div class="a" style="left:1660px;top:128px;width:17px;height:17px;background:#f0f0f0;border-right:1px solid #a0a0a0;border-bottom:1px solid #a0a0a0"></div>
<svg class="a" style="left:1665px;top:135px" width="8" height="5"><path d="M0 4.5 L7 4.5 L3.5 0.5 Z" fill="#000"/></svg>
<div class="a" style="left:1660px;top:764px;width:17px;height:8px;background:#f0f0f0;border-right:1px solid #a0a0a0;border-bottom:1px solid #a0a0a0"></div>
<div class="a" style="left:1660px;top:821px;width:17px;height:16px;background:#f0f0f0;border-right:1px solid #a0a0a0"></div>
<svg class="a" style="left:1665px;top:830px" width="8" height="5"><path d="M0 0.5 L7 0.5 L3.5 4.5 Z" fill="#000"/></svg>
</body></html>
